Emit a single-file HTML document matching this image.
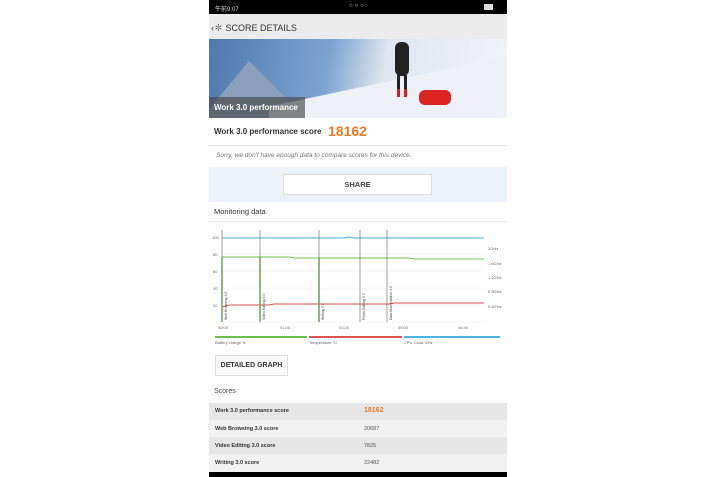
<!DOCTYPE html>
<html><head><style>
body{margin:0;width:715px;height:477px;background:#fff;position:relative;overflow:hidden;font-family:"Liberation Sans","Noto Sans CJK SC",sans-serif;}
.a{position:absolute}
</style></head><body>
<div class="a" style="left:209px;top:0;width:298px;height:477px;background:#f4f4f4"></div>
<div class="a" style="left:209px;top:0;width:298px;height:14px;background:#000;color:#ddd;font-size:6px">
<span class="a" style="left:6px;top:4px">午前9:07</span>
<span class="a" style="left:140px;top:3px;letter-spacing:2px">○○○</span>
<span class="a" style="left:275px;top:4px;width:7px;height:4px;border:1px solid #ddd;background:#ddd"></span>
</div>
<div class="a" style="left:209px;top:14px;width:298px;height:25px;background:#ececec;color:#333;font-size:9px"><span class="a" style="left:2px;top:7px">‹✽ SCORE DETAILS</span></div>
<div class="a" style="left:209px;top:39px;width:298px;height:79px;overflow:hidden;background:linear-gradient(100deg,#4f78ad 0%,#7ea5d3 40%,#dfe6ef 58%,#f3f5f9 100%)">
<div class="a" style="left:-10px;top:22px;width:0;height:0;border-left:50px solid transparent;border-right:60px solid transparent;border-bottom:60px solid #8aa0bd"></div>
<div class="a" style="left:60px;top:40px;width:260px;height:60px;background:#eef1f6;transform:skewY(-12deg)"></div>
<div class="a" style="left:0;top:58px;width:96px;height:21px;background:rgba(70,70,70,.65)"></div>
<span class="a" style="left:5px;top:64px;color:#fff;font-size:8px;font-weight:bold">Work 3.0 performance</span>
<div class="a" style="left:186px;top:3px;width:14px;height:34px;background:#222;border-radius:6px"></div>
<div class="a" style="left:188px;top:36px;width:3px;height:14px;background:#222"></div><div class="a" style="left:195px;top:36px;width:3px;height:14px;background:#222"></div>
<div class="a" style="left:188px;top:50px;width:3px;height:8px;background:#c22"></div><div class="a" style="left:195px;top:50px;width:3px;height:8px;background:#c22"></div>
<div class="a" style="left:210px;top:51px;width:32px;height:15px;background:#d22;border-radius:6px"></div>
</div>
<div class="a" style="left:209px;top:118px;width:298px;height:27px;background:#fff;border-bottom:1px solid #e6e6e6">
<span class="a" style="left:5px;top:9px;font-size:8px;font-weight:bold;color:#333">Work 3.0 performance score</span>
<span class="a" style="left:119px;top:5px;font-size:14px;font-weight:bold;color:#f07a22">18162</span></div>
<div class="a" style="left:209px;top:146px;width:298px;height:21px;background:#fff"><span class="a" style="left:7px;top:6px;font-size:6.5px;font-style:italic;color:#777">Sorry, we don't have enough data to compare scores for this device.</span></div>
<div class="a" style="left:209px;top:167px;width:298px;height:35px;background:#eef3f9"></div>
<div class="a" style="left:283px;top:174px;width:149px;height:21px;background:#fff;border:1px solid #ddd;box-sizing:border-box;text-align:center;font-size:7.5px;font-weight:bold;color:#444;line-height:20px">SHARE</div>
<div class="a" style="left:209px;top:202px;width:298px;height:270px;background:#fff"></div>
<div class="a" style="left:209px;top:221px;width:298px;height:1px;background:#eee"></div>
<span class="a" style="left:214px;top:207px;font-size:7.5px;color:#333">Monitoring data</span>
<svg class="a" style="left:209px;top:225px" width="298" height="122" font-size="4" fill="#666">
<g stroke="#eee" stroke-width=".5"><line x1="13" y1="12" x2="275" y2="12"/><line x1="13" y1="29" x2="275" y2="29"/><line x1="13" y1="46" x2="275" y2="46"/><line x1="13" y1="63" x2="275" y2="63"/><line x1="13" y1="80" x2="275" y2="80"/><line x1="13" y1="97" x2="275" y2="97"/></g>
<text x="3" y="14">100</text><text x="4" y="31">80</text><text x="4" y="48">60</text><text x="4" y="65">40</text><text x="4" y="82">20</text>
<text x="279" y="25">2GHz</text><text x="279" y="40">1.6GHz</text><text x="279" y="54">1.2GHz</text><text x="279" y="68">0.8GHz</text><text x="279" y="83">0.4GHz</text>
<polyline fill="none" stroke="#4ab3e0" stroke-width="1" points="13,13 135,13 140,12 145,13 275,13"/>
<polyline fill="none" stroke="#6cc04a" stroke-width="1" points="13,32 80,32 85,33 200,33 205,34 275,34"/>
<polyline fill="none" stroke="#d9534f" stroke-width="1" points="13,82 20,80 60,80 65,79 120,79 180,79 185,78 275,78"/>
<g stroke="#6cc04a" stroke-width="1.5"><line x1="13" y1="32" x2="13" y2="97"/><line x1="51" y1="32" x2="51" y2="97"/><line x1="110" y1="33" x2="110" y2="97"/></g>
<g stroke="#777" stroke-width=".7"><line x1="13" y1="5" x2="13" y2="97"/><line x1="51" y1="5" x2="51" y2="97"/><line x1="110" y1="5" x2="110" y2="97"/><line x1="151" y1="5" x2="151" y2="97"/><line x1="178" y1="5" x2="178" y2="97"/></g>
<g font-size="3.5" fill="#444"><text transform="translate(18,95) rotate(-90)">Web Browsing 3.0</text><text transform="translate(56,95) rotate(-90)">Video Editing 3.0</text><text transform="translate(115,95) rotate(-90)">Writing 3.0</text><text transform="translate(156,95) rotate(-90)">Photo Editing 3.0</text><text transform="translate(183,95) rotate(-90)">Data Manipulation 3.0</text></g>
<text x="9" y="104">00:00</text><text x="71" y="104">01:40</text><text x="130" y="104">03:20</text><text x="189" y="104">05:00</text><text x="249" y="104">06:40</text>
<rect x="6" y="111" width="92" height="2" fill="#6cc04a"/><rect x="100" y="111" width="93" height="2" fill="#d9534f"/><rect x="195" y="111" width="96" height="2" fill="#4ab3e0"/>
<text x="6" y="119">Battery charge %</text><text x="100" y="119">Temperature °C</text><text x="195" y="119">CPU Clock GHz</text>
</svg>
<div class="a" style="left:215px;top:355px;width:73px;height:21px;border:1px solid #ddd;box-sizing:border-box;background:#fafafa;text-align:center;line-height:20px;font-size:7px;font-weight:bold;color:#333">DETAILED GRAPH</div>
<span class="a" style="left:214px;top:388px;font-size:7px;color:#444">Scores</span>
<div class="a" style="left:209px;top:403px;width:298px;height:17px;background:#e6e6e6"></div>
<div class="a" style="left:209px;top:420px;width:298px;height:17px;background:#f2f2f2"></div>
<div class="a" style="left:209px;top:437px;width:298px;height:17px;background:#e6e6e6"></div>
<div class="a" style="left:209px;top:454px;width:298px;height:18px;background:#f2f2f2"></div>
<div class="a" style="left:215px;font-size:5.5px;font-weight:bold;color:#333;top:408px">Work 3.0 performance score</div>
<div class="a" style="left:364px;font-size:7px;font-weight:bold;color:#f07a22;top:407px">18162</div>
<div class="a" style="left:215px;font-size:5.5px;font-weight:bold;color:#333;top:426px">Web Browsing 3.0 score</div>
<div class="a" style="left:364px;font-size:5.5px;color:#555;top:426px">20687</div>
<div class="a" style="left:215px;font-size:5.5px;font-weight:bold;color:#333;top:443px">Video Editing 3.0 score</div>
<div class="a" style="left:364px;font-size:5.5px;color:#555;top:443px">7825</div>
<div class="a" style="left:215px;font-size:5.5px;font-weight:bold;color:#333;top:460px">Writing 3.0 score</div>
<div class="a" style="left:364px;font-size:5.5px;color:#555;top:460px">22482</div>
<div class="a" style="left:209px;top:472px;width:298px;height:5px;background:#000"></div>
</body></html>
